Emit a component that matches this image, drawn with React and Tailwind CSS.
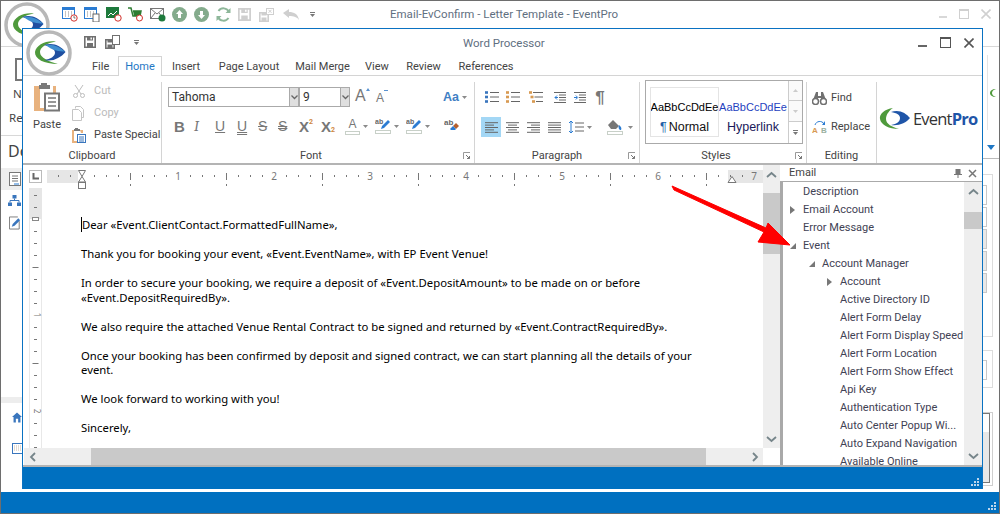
import React from "react";

const UI = "font-['Roboto',sans-serif]";

function Logo({ size = 46 }) {
  return (
    <svg width={size} height={size} viewBox="0 0 46 46" className="shrink-0">
      <circle cx="23" cy="23" r="21" fill="#fff" stroke="#b8b8b8" strokeWidth="3.500" />
      <path d="M30 11.500C20 10 10 15 9 22c-.5 7 9 12 23 12-9-2.500-18-6-18-12 0-5 7-9 16-10.500z" fill="#4f9a3c" />
      <path d="M18 15c9-3 17 1 21.500 7-5 6-13 10-21 8 6-1 10.500-3.500 10.500-7.500 0-3-4-6-11-7.500z" fill="#1f4fa0" />
      <path d="M20 15c7-1.500 14 2 19 6.500-5 0-14-1-19-6.500z" fill="#3f8fd0" />
    </svg>
  );
}

function Swoosh() {
  return (
    <svg width="32" height="24" viewBox="0 0 32 24" className="shrink-0">
      <path d="M14 1C6 2 0 7 1 12c1 6 9 10 19 10-7-2-13-5-13-10 0-5 4-9 7-11z" fill="#4f9a3c" />
      <path d="M12 5c8-3 15 1 19 6-4 5-11 8-19 7 6-1 9-3.500 9-7 0-3-3-5-9-6z" fill="#1f55a8" />
    </svg>
  );
}

function Cal({ clock }) {
  return (
    <svg width="16" height="15" viewBox="0 0 16 15">
      <rect x="0.500" y="0.500" width="12" height="11" fill="#fff" stroke="#2b7cd3" />
      <rect x="0.500" y="0.500" width="12" height="2.500" fill="#2b7cd3" />
      <path d="M3 5h1M6 5h1M9 5h1M3 7h1M6 7h1M9 7h1M3 9h1M6 9h1" stroke="#888" />
      {clock ? <circle cx="12" cy="11" r="3.200" fill="#fff" stroke="#d2322d" /> : <rect x="9" y="7" width="6" height="8" fill="#fff" stroke="#666" />}
      {clock && <path d="M12 9v2h1.500" stroke="#555" fill="none" strokeWidth=".8" />}
    </svg>
  );
}

const Circle = ({ up }) => (
  <svg width="15" height="15" viewBox="0 0 15 15">
    <circle cx="7.500" cy="7.500" r="7.500" fill="#84ab8c" />
    <path d={up ? "M7.500 3L11 7H9v4H6V7H4z" : "M7.500 12L11 8H9V4H6v4H4z"} fill="#fff" />
  </svg>
);

const Floppy = ({ c = "#cfcfcf", w = 12 }) => (
  <svg width={w} height={w} viewBox="0 0 12 12">
    <path d="M.8.8h10.400v10.400H.8z" fill="none" stroke={c} strokeWidth="1.600" />
    <path d="M3 1h6v3.500H3zM3 7h6v4H3z" fill={c} />
    <path d="M6.500 1.500h1.400v2H6.500z" fill="#fff" />
  </svg>
);

function SaveClose({ c = "#cfcfcf", inner }) {
  return (
    <svg width="15" height="14" viewBox="0 0 15 14">
      <path d="M.8 4.800h8.400v8.400H.8z" fill="none" stroke={c} strokeWidth="1.600" />
      <path d="M2.500 5h5v2.500h-5zM2.500 9.500h5V13h-5z" fill={c} />
      <rect x="7.500" y=".5" width="7" height={inner ? 9 : 6} fill="#fff" stroke={c} />
      {!inner && <path d="M9.500 1.800l3 3m0-3l-3 3" stroke={c} />}
    </svg>
  );
}

const Caret = ({ c = "#8a8a8a" }) => (
  <svg width="5" height="3" viewBox="0 0 5 3" className="shrink-0"><path d="M0 0h5L2.500 3z" fill={c} /></svg>
);

const Launcher = () => (
  <svg width="8" height="8" viewBox="0 0 8 8" className="shrink-0">
    <path d="M.5 7V.5H7" fill="none" stroke="#999" />
    <path d="M3 3l3.500 3.500M6.500 4v2.500H4" fill="none" stroke="#777" />
  </svg>
);

function Lines({ a = "left", w = 13 }) {
  const rows = [0, 1, 2, 3, 4];
  return (
    <svg width={w} height="11" viewBox="0 0 13 11">
      {rows.map((i) => {
        const y = i * 2.4 + 0.7;
        const short = i % 2 === 1;
        let x1 = 0, x2 = 13;
        if (short && a === "left") x2 = 9;
        if (short && a === "center") { x1 = 2; x2 = 11; }
        if (short && a === "right") x1 = 4;
        return <path key={i} d={`M${x1} ${y}H${x2}`} stroke="#666" strokeWidth="1" />;
      })}
    </svg>
  );
}

function BulletList({ kind }) {
  const mark = kind === "bullet" ? "#3a76bd" : "#d89a52";
  return (
    <svg width="14" height="12" viewBox="0 0 14 12">
      {[1.5, 6, 10.5].map((y, i) => (
        <g key={i}>
          <rect x={kind === "multi" ? i * 1.5 : 0} y={y - 1.3} width="3" height="2.600" fill={mark} />
          <path d={`M${kind === "multi" ? 4 + i * 1.5 : 5} ${y}H14`} stroke="#666" />
        </g>
      ))}
    </svg>
  );
}

function Indent({ inn }) {
  return (
    <svg width="12" height="11" viewBox="0 0 12 11">
      <path d="M0 .5h12M0 10.500h12M5 3h7M5 5.500h7M5 8h7" stroke="#666" />
      <path d={inn ? "M0 5.500h3M1.800 3.500l2 2-2 2" : "M4 5.500H1M3 3.500l-2 2 2 2"} stroke="#2b7cd3" fill="none" />
    </svg>
  );
}

const HiLite = () => (
  <div className="flex items-center gap-[3px]">
    <svg width="16" height="16" viewBox="0 0 16 16">
      <path d="M6 11l1-3 6-6 2 2-6 6z" fill="#2b7cd3" />
      <rect x=".5" y="12.500" width="15" height="3" fill="#fff" stroke="#c8d0c8" />
      <text x="0" y="6" fontSize="7" fontWeight="700" fill="#666" fontFamily="Liberation Sans">ab</text>
    </svg>
    <Caret />
  </div>
);

function Glyph({ children, className = "" }) {
  return <span className={`font-['Liberation_Sans',sans-serif] text-[#777] leading-none ${className}`}>{children}</span>;
}

function RibbonLabel({ children, launcher, shift }) {
  return (
    <div className={`flex h-[16px] pt-[2px] items-center justify-center relative text-[11px] text-[#444] ${shift ? "pr-[14px]" : ""}`}>
      {children}
      {launcher && <span className="absolute right-[3px] top-[5px]"><Launcher /></span>}
    </div>
  );
}

function Group({ w, label, launcher, shift, children }) {
  return (
    <div className="flex flex-col shrink-0 border-r border-[#d4d4d4]" style={{ width: w }}>
      <div className="flex-1 min-h-0">{children}</div>
      <RibbonLabel launcher={launcher} shift={shift}>{label}</RibbonLabel>
    </div>
  );
}

function Clipboard() {
  return (
    <div className="flex pl-[6px] pt-[1px]">
      <div className="flex flex-col items-center w-[36px]">
        <svg width="28" height="29" viewBox="0 0 28 29">
          <path d="M1 3h6v22h10v3H1zM16 3h7v7h-3V3z" fill="#e8b27e" />
          <path d="M8 0h6v2h3v4H6V2h2z" fill="#7a7a7a" />
          <rect x="12" y="10.500" width="14" height="17" fill="#fff" stroke="#777" strokeWidth="2" />
          <path d="M15 15h8M15 19h8M15 23h8" stroke="#777" strokeWidth="1.600" />
        </svg>
        <span className="text-[11px] text-[#444] mt-[6px] leading-[14px]">Paste</span>
      </div>
      <div className="flex flex-col ml-[7px] -mt-[3px]">
        {[
          ["Cut", "#bbb", <svg key="c" width="14" height="14" viewBox="0 0 14 14"><path d="M3 1l6 9M11 1L5 10" stroke="#bdbdbd" fill="none" /><circle cx="3.500" cy="11.500" r="2" fill="none" stroke="#bdbdbd" /><circle cx="10.500" cy="11.500" r="2" fill="none" stroke="#bdbdbd" /></svg>],
          ["Copy", "#bbb", <svg key="d" width="14" height="15" viewBox="0 0 14 15"><path d="M3.500 2.500V.5h5l3 3v8h-2" fill="#fff" stroke="#c4c4c4" /><path d="M.5 3.500h6l3 3v8h-9z" fill="#fff" stroke="#c4c4c4" /></svg>],
          ["Paste Special", "#444", <svg key="p" width="14" height="15" viewBox="0 0 14 15"><path d="M0 2h2v11h5v2H0zM8 2h3v3H9z" fill="#e8b27e" /><path d="M3 0h3v1h2v2H2V1h1z" fill="#777" /><rect x="5.500" y="6.500" width="8" height="8" fill="#fff" stroke="#3a76bd" /><path d="M7 9h5M7 11h5M7 13h5" stroke="#3a76bd" /></svg>],
        ].map(([t, c, icon]) => (
          <div key={t} className="flex h-[22px] items-center gap-[8px]">
            <span className="w-[14px] flex justify-center">{icon}</span>
            <span className="text-[11px] whitespace-nowrap" style={{ color: c }}>{t}</span>
          </div>
        ))}
      </div>
    </div>
  );
}

function Combo({ w, text }) {
  return (
    <div className="flex h-[20px] border border-[#aaa] bg-white items-stretch" style={{ width: w }}>
      <span className="flex-1 text-[12px] leading-[18px] pl-[3px] text-[#333]">{text}</span>
      <span className="w-[9px] bg-[#dfdfdf] border-l border-[#aaa] flex items-center justify-center">
        <svg width="7" height="5" viewBox="0 0 7 5"><path d="M.5.5l3 3 3-3" fill="none" stroke="#666" strokeWidth="1.300" /></svg>
      </span>
    </div>
  );
}

function Font() {
  return (
    <div className="flex flex-col pl-[6px] pt-[5px]">
      <div className="flex items-center h-[20px]">
        <Combo w="131px" text="Tahoma" />
        <Combo w="51px" text="9" />
        <span className="ml-[5px] w-[21px] flex items-start h-[18px]"><Glyph className="text-[16px] text-[#666]">A</Glyph><svg width="4" height="3" viewBox="0 0 4 3"><path d="M0 3l2-3 2 3z" fill="#5a93d1" /></svg></span>
        <span className="w-[14px] flex items-start h-[16px] mt-[2px]"><Glyph className="text-[12px] text-[#666] mt-[2px]">A</Glyph><svg width="4" height="2" viewBox="0 0 4 2"><path d="M0 0h4v1H0z" fill="#5a93d1" /></svg></span>
        <span className="ml-[53px] flex items-center gap-[3px]"><span className="font-['Liberation_Sans',sans-serif] font-bold text-[12.500px] text-[#3f7fc4]">Aa</span><Caret /></span>
      </div>
      <div className="flex items-center h-[20px] mt-[9px] pl-[6px]">
        <Glyph className="w-[20px] font-bold text-[15px]">B</Glyph>
        <Glyph className="w-[21px] italic font-serif text-[15px]">I</Glyph>
        <Glyph className="w-[22px] underline text-[14px]">U</Glyph>
        <Glyph className="w-[21px] underline decoration-double text-[14px]">U</Glyph>
        <Glyph className="w-[20px] line-through text-[14px]">S</Glyph>
        <Glyph className="w-[21px] line-through decoration-double text-[14px]">S</Glyph>
        <span className="w-[22px] flex items-start"><Glyph className="font-bold text-[15px]">X</Glyph><span className="text-[7px] font-bold leading-none text-[#d0883e]">2</span></span>
        <span className="w-[24px] flex items-end"><Glyph className="font-bold text-[15px]">X</Glyph><span className="text-[7px] font-bold leading-none text-[#d0883e]">2</span></span>
        <span className="w-[30px] flex items-center gap-[3px]">
          <span className="flex flex-col items-center w-[15px]"><Glyph className="text-[12px]">A</Glyph><span className="w-[15px] h-[4px] border border-[#c8d0c8] bg-white mt-[1px]" /></span>
          <Caret />
        </span>
        <span className="w-[31px]"><HiLite /></span>
        <span className="w-[38px]"><HiLite /></span>
        <svg width="15" height="13" viewBox="0 0 15 13" className="-mt-[4px]">
          <text x="0" y="7" fontSize="8" fontWeight="700" fill="#666" fontFamily="Liberation Sans">ab</text>
          <path d="M9 8l3-3 3 3-3 3z" fill="#b5602e" /><path d="M6 11l3-3 3 3-1 1H7z" fill="#2b7cd3" />
        </svg>
      </div>
    </div>
  );
}

function Paragraph() {
  return (
    <div className="flex flex-col pl-[6px] pt-[5px]">
      <div className="flex items-center h-[20px]">
        <span className="w-[21px] flex justify-center"><BulletList kind="bullet" /></span>
        <span className="w-[21px] flex justify-center"><BulletList kind="num" /></span>
        <span className="w-[26px] flex justify-center"><BulletList kind="multi" /></span>
        <span className="w-[21px] flex justify-center"><Indent /></span>
        <span className="w-[20px] flex justify-center"><Indent inn /></span>
        <Glyph className="w-[20px] text-center font-bold text-[17px]">¶</Glyph>
      </div>
      <div className="flex items-center h-[20px] mt-[10px]">
        <span className="w-[20px] h-[20px] bg-[#a3d7f5] flex items-center justify-center"><Lines a="left" /></span>
        <span className="w-[22px] flex justify-center"><Lines a="center" /></span>
        <span className="w-[20px] flex justify-center"><Lines a="right" /></span>
        <span className="w-[22px] flex justify-center"><Lines a="just" /></span>
        <span className="w-[42px] flex items-center pl-[4px] gap-[3px]">
          <svg width="15" height="14" viewBox="0 0 15 14"><path d="M2 1v12M0 3l2-2 2 2M0 11l2 2 2-2" stroke="#2b7cd3" fill="none" /><path d="M6 3h9M6 7h9M6 11h9" stroke="#666" /></svg>
          <Caret />
        </span>
        <span className="flex items-center gap-[5px]">
          <svg width="16" height="16" viewBox="0 0 16 16"><path d="M1 6l5-5 6 6-3 3H4z" fill="#777" /><path d="M12 6c2 2 3 3 2 5-2 0-3-2-2-5z" fill="#2b7cd3" /><rect x=".5" y="12.500" width="15" height="3" fill="#fff" stroke="#c8d0c8" /></svg>
          <Caret />
        </span>
      </div>
    </div>
  );
}

function Styles() {
  return (
    <div className="pl-[5px] -mt-[2px]">
      <div className="flex h-[64px] w-[158px] border border-[#aaa] bg-white font-['Liberation_Sans',sans-serif]">
        <div className="flex flex-1 min-w-0 pl-[4px] py-[6px] overflow-hidden">
          <div className="w-[69px] shrink-0 border border-[#e4e4e4] flex flex-col items-center overflow-hidden">
            <span className="h-[27px] flex items-end text-[11px] text-black whitespace-nowrap">AaBbCcDdEe</span>
            <span className="h-[20px] flex items-end text-[12.500px] leading-[16px] text-[#111] whitespace-nowrap"><span className="text-[#1f5fa8] mr-[2px]">¶</span>Normal</span>
          </div>
          <div className="w-[68px] shrink-0 flex flex-col items-center overflow-hidden pt-[1px]">
            <span className="h-[27px] flex items-end text-[11px] text-[#1f3fc0] whitespace-nowrap">AaBbCcDdEe</span>
            <span className="h-[20px] flex items-end text-[12.500px] leading-[16px] text-[#1a1a5a] whitespace-nowrap">Hyperlink</span>
          </div>
        </div>
        <div className="w-[14px] border-l border-[#ccc] flex flex-col shrink-0">
          <span className="h-[20px] border-b border-[#ccc] flex items-center justify-center bg-[#fafafa]"><svg width="5" height="3" viewBox="0 0 5 3"><path d="M0 3h5L2.500 0z" fill="#ccc" /></svg></span>
          <span className="h-[21px] border-b border-[#ccc] flex items-center justify-center bg-[#fafafa]"><Caret c="#ccc" /></span>
          <span className="flex-1 flex flex-col gap-[1px] items-center justify-center"><span className="w-[5px] h-[1px] bg-[#777]" /><Caret c="#777" /></span>
        </div>
      </div>
    </div>
  );
}

function Editing() {
  return (
    <div className="flex flex-col pl-[5px] pt-[6px]">
      <div className="flex items-center h-[20px] gap-[4px]">
        <svg width="15" height="13" viewBox="0 0 15 13"><path d="M4 0h2v4h3V0h2l3 8H9V6H6v2H1z" fill="#707070" /><circle cx="3.500" cy="9.500" r="3" fill="#fff" stroke="#707070" strokeWidth="1.500" /><circle cx="11.500" cy="9.500" r="3" fill="#fff" stroke="#707070" strokeWidth="1.500" /></svg>
        <span className="text-[11px] text-[#444]">Find</span>
      </div>
      <div className="flex items-center h-[20px] gap-[4px] mt-[9px]">
        <svg width="15" height="14" viewBox="0 0 15 14"><path d="M3 5c1-4 7-5 9-1" fill="none" stroke="#2b7cd3" /><path d="M13 1v4h-3z" fill="#2b7cd3" /><text x="0" y="13" fontSize="8" fontWeight="700" fill="#d89a52" fontFamily="Liberation Sans">A</text><text x="9" y="13" fontSize="8" fontWeight="700" fill="#9ab0a0" fontFamily="Liberation Sans">B</text></svg>
        <span className="text-[11px] text-[#444]">Replace</span>
      </div>
    </div>
  );
}

function HRuler() {
  const ticks = [];
  for (let k = -2; k <= 55; k++) {
    const x = 35 + k * 12;
    if (k % 8 === 0) continue;
    const half = k % 4 === 0;
    ticks.push(
      half ? (
        <path key={k} d={`M${x + 0.5} 3v7M${x + 0.5} 14v2`} stroke="#777" />
      ) : (
        <path key={k} d={`M${x + 0.5} 5v2`} stroke="#777" />
      )
    );
  }
  return (
    <svg width="716" height="23" viewBox="0 0 716 23" className="shrink-0">
      <rect x="0" y="0" width="716" height="13" fill="#fff" />
      <rect x="0" y="0" width="31" height="13" fill="#e6e6e6" />
      <rect x="681" y="0" width="35" height="13" fill="#e6e6e6" />
      {ticks}
      {[1, 2, 3, 4, 5, 6, 7].map((n) => (
        <text key={n} x={35 + n * 96} y="10" textAnchor="middle" fontSize="10" fill="#777" fontFamily="Noto Sans">{n}</text>
      ))}
      <path d="M31.500 .500h7l-3.500 6 3.500 5.500h-7l3.500-5.500z" fill="#fff" stroke="#777" />
      <rect x="31.500" y="12.500" width="7" height="6" fill="#fff" stroke="#777" />
      <path d="M681 12.500l4-6 4 6z" fill="#fff" stroke="#777" />
    </svg>
  );
}

function VRuler() {
  const ticks = [];
  for (let k = 0; k <= 21; k++) {
    const y = 7 + k * 12;
    if (k === 2 || k === 10 || k === 18) continue;
    const half = (k - 2) % 4 === 0;
    ticks.push(<path key={k} d={half ? `M3.500 ${y + 0.5}h6` : `M5 ${y + 0.5}h3`} stroke="#777" />);
  }
  return (
    <svg width="13" height="261" viewBox="0 0 13 261" className="shrink-0">
      <rect x="0" width="13" height="261" fill="#fff" />
      <rect x="0" width="13" height="31" fill="#e6e6e6" />
      <path d="M.5 31v230M12.500 31v230" stroke="#e8e8e8" />
      {ticks}
      <rect x="3.500" y="29.500" width="6" height="3" fill="#fff" stroke="#888" />
      <text x="6.500" y="129" textAnchor="middle" fontSize="8" fill="#777" fontFamily="Noto Sans" transform="rotate(90 6.500 127)">1</text>
      <text x="6.500" y="225" textAnchor="middle" fontSize="8" fill="#777" fontFamily="Noto Sans" transform="rotate(90 6.500 223)">2</text>
    </svg>
  );
}

const Chev = ({ d }) => {
  const p = { up: "M1 6l4.500-4 4.500 4", down: "M1 1l4.500 4 4.500-4", left: "M6 1L2 5l4 4", right: "M2 1l4 4-4 4" }[d];
  const w = d === "up" || d === "down" ? 11 : 8;
  const h = d === "up" || d === "down" ? 7 : 10;
  return <svg width={w} height={h} viewBox={`0 0 ${w} ${h}`}><path d={p} fill="none" stroke="#76858a" strokeWidth="1.800" /></svg>;
};

function DocPanel() {
  return (
    <div className="w-[756px] shrink-0 flex flex-col">
      <div className="flex flex-1 min-h-0">
        <div className="w-[739px] flex flex-col shrink-0 overflow-hidden">
          <div className="flex h-[23px] shrink-0 pl-[5px] pt-[5px] gap-[5px]">
            <span className="w-[13px] h-[13px] border border-[#bbb] flex items-center justify-center shrink-0">
              <svg width="7" height="7" viewBox="0 0 7 7"><path d="M1.500 0v5.500H7" fill="none" stroke="#666" strokeWidth="2" /></svg>
            </span>
            <HRuler />
          </div>
          <div className="flex flex-1 min-h-0 pl-[5px]">
            <VRuler />
            <div className="pl-[39px] pt-[30px] text-[11.300px] leading-[14.500px] text-black font-['Noto_Sans',sans-serif] whitespace-nowrap">
              <p><span className="border-l border-black">Dear</span> «Event.ClientContact.FormattedFullName»,</p><br />
              <p>Thank you for booking your event, «Event.EventName», with EP Event Venue!</p><br />
              <p>In order to secure your booking, we require a deposit of «Event.DepositAmount» to be made on or before<br />«Event.DepositRequiredBy».</p><br />
              <p>We also require the attached Venue Rental Contract to be signed and returned by «Event.ContractRequiredBy».</p><br />
              <p>Once your booking has been confirmed by deposit and signed contract, we can start planning all the details of your<br />event.</p><br />
              <p>We look forward to working with you!</p><br />
              <p>Sincerely,</p>
            </div>
          </div>
        </div>
        <div className="w-[17px] bg-[#eeeeee] flex flex-col items-center shrink-0">
          <span className="h-[18px] flex items-center"><Chev d="up" /></span>
          <span className="w-full h-[61px] bg-[#c9c9c9] mt-[10px]" />
          <span className="flex-1" />
          <span className="h-[18px] flex items-center"><Chev d="down" /></span>
        </div>
      </div>
      <div className="h-[17px] flex shrink-0">
        <div className="w-[739px] bg-[#eeeeee] flex items-center">
          <span className="w-[67px] pl-[5px] flex items-center"><Chev d="left" /></span>
          <span className="w-[615px] h-full bg-[#c9c9c9]" />
          <span className="flex-1 flex justify-end pr-[4px]"><Chev d="right" /></span>
        </div>
      </div>
    </div>
  );
}

const ROWS = [
  ["Description", 0], ["Email Account", 0, "r"], ["Error Message", 0], ["Event", 0, "d"],
  ["Account Manager", 1, "d"], ["Account", 2, "r"], ["Active Directory ID", 2], ["Alert Form Delay", 2],
  ["Alert Form Display Speed", 2], ["Alert Form Location", 2], ["Alert Form Show Effect", 2], ["Api Key", 2],
  ["Authentication Type", 2], ["Auto Center Popup Wi...", 2], ["Auto Expand Navigation", 2], ["Available Online", 2],
];

function Tree() {
  return (
    <div className="flex-1 min-w-0 overflow-hidden pt-[1px]">
      {ROWS.map(([t, lvl, ex]) => (
        <div key={t} className="h-[18px] flex items-center text-[11px] text-[#3f4254] whitespace-nowrap" style={{ paddingLeft: 6 + lvl * 18 + (lvl > 0 ? 1 : 0) }}>
          <span className="w-[14px] flex justify-start pl-[1px] shrink-0">
            {ex === "r" && <svg width="5" height="8" viewBox="0 0 5 8"><path d="M0 0l5 4-5 4z" fill="#777" /></svg>}
            {ex === "d" && <svg width="6" height="6" viewBox="0 0 6 6"><path d="M6 0v6H0z" fill="#777" /></svg>}
          </span>
          <span>{t}</span>
        </div>
      ))}
    </div>
  );
}

function EmailPanel() {
  return (
    <div className="flex-1 min-w-0 border-l-[3px] border-[#a9a9a9] flex flex-col">
      <div className="h-[17px] flex items-center shrink-0 pl-[9px] pr-[5px] border-b border-[#aaa] text-[11px] text-[#444] -ml-[3px] bg-white z-10">
        <span className="flex-1">Email</span>
        <svg width="8" height="9" viewBox="0 0 8 9" className="mr-[6px]"><path d="M1.500 0h5v5H8v1H4.500v3h-1V6H0V5h1.500z" fill="#777" /></svg>
        <svg width="9" height="9" viewBox="0 0 9 9"><path d="M1 1l7 7M8 1L1 8" stroke="#777" strokeWidth="1.500" /></svg>
      </div>
      <div className="flex flex-1 min-h-0">
        <Tree />
        <div className="w-[18px] bg-[#eeeeee] flex flex-col items-center shrink-0">
          <span className="h-[18px] flex items-center"><Chev d="up" /></span>
          <span className="w-full h-[17px] bg-[#c9c9c9] mt-[12px]" />
          <span className="flex-1" />
          <span className="h-[18px] flex items-center"><Chev d="down" /></span>
        </div>
      </div>
    </div>
  );
}

const Grip = () => (
  <svg width="9" height="9" viewBox="0 0 9 9"><path d="M6 0h2v2H6zM3 3h2v2H3zM6 3h2v2H6zM0 6h2v2H0zM3 6h2v2H3zM6 6h2v2H6z" fill="#bcd6ec" /></svg>
);

function WordWindow() {
  return (
    <div className="absolute left-[22px] top-[28px] w-[961px] h-[461px] border border-[#0a72c2] border-b-0 bg-white flex flex-col">
      <div className="h-[27px] flex items-start shrink-0 relative">
        <div className="absolute left-[3px] top-[1px] z-10"><Logo /></div>
        <div className="flex items-center gap-[9px] pl-[61px] pt-[6px] w-[200px]">
          <Floppy c="#707070" />
          <SaveClose c="#707070" inner />
          <span className="ml-[5px]"><span className="block w-[5px] h-[1px] bg-[#777] mb-[1px]" /><Caret c="#777" /></span>
        </div>
        <span className="absolute left-[440px] top-[6px] text-[11.500px] text-[#5f6f7f]">Word Processor</span>
        <div className="ml-auto flex items-center gap-[13px] pr-[8px] pt-[8px]">
          <span className="w-[9px] h-[2px] bg-[#666] mt-[6px]" />
          <span className="w-[11px] h-[11px] border border-[#555] border-t-2" />
          <svg width="10" height="10" viewBox="0 0 10 10"><path d="M.5.5l9 9M9.500.5l-9 9" stroke="#555" strokeWidth="1.600" /></svg>
        </div>
      </div>
      <div className="h-[20px] flex shrink-0 items-end pl-[58px] text-[11px] text-[#444] border-b border-[#d4d4d4] whitespace-nowrap">
        <span className="w-[37px] h-[19px] flex items-center pl-[11px] pt-[3px]">File</span>
        <span className="w-[44px] h-[20px] flex items-center justify-center border border-b-0 border-[#d4d4d4] text-[#1f77c4] bg-white -mb-[1px] pt-[2px]">Home</span>
        <span className="w-[48px] h-[19px] flex items-center justify-center pt-[3px]">Insert</span>
        <span className="w-[78px] h-[19px] flex items-center justify-center pt-[3px]">Page Layout</span>
        <span className="w-[69px] h-[19px] flex items-center justify-center pt-[3px]">Mail Merge</span>
        <span className="w-[40px] h-[19px] flex items-center justify-center pt-[3px]">View</span>
        <span className="w-[53px] h-[19px] flex items-center justify-center pt-[3px]">Review</span>
        <span className="w-[72px] h-[19px] flex items-center justify-center pt-[3px]">References</span>
      </div>
      <div className="h-[89px] flex shrink-0 border-b-2 border-[#b4b4b4] pt-[6px]">
        <Group w="139px" label="Clipboard"><Clipboard /></Group>
        <Group w="313px" label="Font" launcher shift><Font /></Group>
        <Group w="165px" label="Paragraph" launcher><Paragraph /></Group>
        <Group w="167px" label="Styles" launcher shift><Styles /></Group>
        <Group w="70px" label="Editing"><Editing /></Group>
        <div className="flex-1 flex items-start pl-[2px] pt-[25px] gap-[2px] min-w-0">
          <Swoosh />
          <span className="font-['Open_Sans',sans-serif] text-[16.500px] leading-[24px] font-medium tracking-[-0.8px] whitespace-nowrap text-[#333]">Event<span className="text-[#1f55a8] font-bold">Pro</span></span>
        </div>
      </div>
      <div className="h-[302px] flex shrink-0 border-b-2 border-[#b4b4b4] pl-[1px]">
        <DocPanel />
        <EmailPanel />
      </div>
      <div className="flex-1 bg-[#0070c0] flex items-end justify-end pr-[2px] pb-[2px]"><Grip /></div>
    </div>
  );
}

function TopIcons() {
  return (
    <div className="flex items-center h-[15px]">
      <span className="w-[22px]"><Cal clock /></span>
      <span className="w-[22px]"><Cal /></span>
      <span className="w-[22px]">
        <svg width="16" height="15" viewBox="0 0 16 15"><rect width="13" height="11" fill="#1e7a3c" /><path d="M2 9l3-3 2 2 4-4" stroke="#fff" fill="none" /><circle cx="12" cy="11" r="3.200" fill="#fff" stroke="#d2322d" /></svg>
      </span>
      <span className="w-[22px]">
        <svg width="16" height="15" viewBox="0 0 16 15"><path d="M0 1h3l2 8h7l1-5H5" fill="none" stroke="#2e7d32" strokeWidth="1.500" /><path d="M5 4h8l-1 5H6z" fill="#2e7d32" /><circle cx="11.500" cy="11" r="3" fill="#fff" stroke="#d2322d" /></svg>
      </span>
      <span className="w-[22px]">
        <svg width="16" height="15" viewBox="0 0 16 15"><rect x=".5" y="1.500" width="13" height="10" fill="#fff" stroke="#777" /><path d="M1 2l6 5 6-5M1 11l4-5M13 11L9 6" stroke="#777" fill="none" /><circle cx="12" cy="11" r="3.500" fill="#1e7a3c" /></svg>
      </span>
      <span className="w-[22px]"><Circle up /></span>
      <span className="w-[22px]"><Circle /></span>
      <span className="w-[22px]">
        <svg width="15" height="15" viewBox="0 0 15 15"><path d="M13 5A6 6 0 0 0 2.500 4M2 10a6 6 0 0 0 10.500 1" fill="none" stroke="#8eb79a" strokeWidth="2" /><path d="M14.500 1v5h-5zM.5 14V9h5z" fill="#8eb79a" /></svg>
      </span>
      <span className="w-[21px]"><Floppy w={13} /></span>
      <span className="w-[24px]"><SaveClose /></span>
      <span className="w-[21px]">
        <svg width="16" height="11" viewBox="0 0 16 11"><path d="M0 4l6-4v3c5 0 9 2 10 8-2-3-5-4-10-4v2z" fill="#cfcfcf" /></svg>
      </span>
      <span className="ml-[6px]"><span className="block w-[5px] h-[1px] bg-[#777] mb-[1px]" /><Caret c="#777" /></span>
    </div>
  );
}

function LeftStrip() {
  return (
    <div className="w-[21px] shrink-0 flex flex-col overflow-hidden text-[#444] whitespace-nowrap font-['Noto_Sans',sans-serif]">
      <div className="h-[89px] border-b border-[#d8d8d8] pl-[14px] pt-[11px] relative">
        <span className="block w-[16px] h-[23px] border-2 border-[#777]" />
        <span className="block -ml-[2px] mt-[6px] text-[11.500px] leading-[14px]">New</span>
        <span className="block -ml-[6px] mt-[10px] text-[11.500px] leading-[14px]">Report</span>
      </div>
      <div className="h-[32px] pl-[7px] pt-[4px] text-[16px] leading-[22px]">Document</div>
      <div className="h-[22px] bg-[#eeeeee] flex items-center pl-[8px]">
        <svg width="12" height="14" viewBox="0 0 12 14"><rect x=".5" y=".5" width="11" height="13" fill="#fff" stroke="#777" /><path d="M3 4h6M3 6.500h6M3 9h6" stroke="#777" /><path d="M5 12h5" stroke="#2b7cd3" /></svg>
      </div>
      <div className="h-[21px] flex items-center pl-[7px]">
        <svg width="13" height="11" viewBox="0 0 13 11"><path d="M4.500 0h4v3.500h-4zM0 7.500h4V11H0zM9 7.500h4V11H9z" fill="#3a76bd" /><path d="M6.500 3.500V6M2 7.500V5.500h9v2" stroke="#3a76bd" fill="none" /></svg>
      </div>
      <div className="h-[24px] flex items-center pl-[8px]">
        <svg width="14" height="14" viewBox="0 0 14 14"><path d="M11 5v8.500H.5V.5h9" fill="#fff" stroke="#777" /><path d="M3 11l1-3 6-6 2 2-6 6z" fill="#3a76bd" /></svg>
      </div>
      <div className="flex-1" />
      <div className="h-[6px] bg-[#ededed]" />
      <div className="h-[28px] flex items-center pl-[11px]">
        <svg width="13" height="13" viewBox="0 0 13 13"><path d="M6.500 0L13 6h-2v7H8V8H5v5H2V6H0z" fill="#3a76bd" /></svg>
      </div>
      <div className="h-[61px] pl-[11px] pt-[12px]">
        <svg width="12" height="11" viewBox="0 0 12 11"><rect x=".5" y=".5" width="11" height="10" fill="#fff" stroke="#3a76bd" /><path d="M2 3h8M2 5h8M2 7h8" stroke="#c8b8a8" strokeDasharray="1 1" /></svg>
      </div>
    </div>
  );
}

function Box({ className = "" }) {
  return <div className={`h-[20px] w-[5px] border border-l-0 border-[#c8c8c8] ${className}`} />;
}

function RightStrip() {
  return (
    <div className="w-[17px] shrink-0 flex flex-col overflow-hidden">
      <div className="h-[112px] border-b border-[#bbb]">
        <div className="h-[75px] mt-[8px] border-l border-[#e4e4e4] ml-[5px] flex items-center pl-[2px]">
          <svg width="7" height="10" viewBox="0 0 7 10" className="mt-[1px]"><path d="M6 1C2 1 0 3 0 5s2 4 6 4C3 8 2 6.500 2 5s1-3 4-4z" fill="#4f9a3c" /></svg>
        </div>
        <div className="flex justify-center mt-[15px]"><svg width="8" height="5" viewBox="0 0 8 5"><path d="M0 0h8L4 5z" fill="#1f77c4" /></svg></div>
      </div>
      <div className="h-[163px] mt-[15px] w-[11px] border border-l-0 border-[#dcdcdc] pt-[10px] flex flex-col gap-[2px]">
        <Box /><Box />
        <Box className="bg-[#e8e8e8]" /><Box className="bg-[#e8e8e8]" /><Box className="bg-[#e8e8e8]" />
      </div>
      <div className="h-[38px] mt-[13px] w-[11px] border border-l-0 border-[#dcdcdc] pt-[9px]"><Box /></div>
      <div className="h-[74px] mt-[24px] w-[11px] border border-l-0 border-[#cfcfcf]">
        <div className="h-[70px] w-[8px] border border-l-0 border-[#777] pt-[18px]">
          <div className="h-[50px] w-[7px] bg-[#e8e8e8]" />
        </div>
      </div>
    </div>
  );
}

function Outer() {
  return (
    <div className="w-[1000px] h-[514px] border border-[#6e6e6e] bg-white flex flex-col overflow-hidden">
      <div className="h-[46px] shrink-0 flex items-start relative border-b border-[#d8d8d8]">
        <div className="absolute left-[3px] top-[1px]"><Logo /></div>
        <div className="pl-[61px] pt-[6px]"><TopIcons /></div>
        <span className="absolute left-[389px] top-[5px] text-[11.500px] text-[#5f6f7f] whitespace-nowrap">Email-EvConfirm - Letter Template - EventPro</span>
        <div className="ml-auto flex items-center gap-[12px] pr-[8px] pt-[8px]">
          <span className="w-[8px] h-[2px] bg-[#d8d8d8] mt-[5px]" />
          <span className="w-[10px] h-[10px] border border-[#d0d0d0] border-t-2" />
          <svg width="10" height="10" viewBox="0 0 10 10"><path d="M.5.5l9 9M9.500.5l-9 9" stroke="#d0d0d0" strokeWidth="1.600" /></svg>
        </div>
      </div>
      <div className="flex-1 min-h-0 flex justify-between">
        <LeftStrip />
        <RightStrip />
      </div>
      <div className="h-[21px] shrink-0 bg-[#0070c0] flex items-end justify-end pr-[2px] pb-[2px]"><Grip /></div>
    </div>
  );
}

function Arrow() {
  return (
    <svg width="130" height="70" viewBox="0 0 130 70" className="absolute left-[668px] top-[183px] pointer-events-none">
      <path d="M4 3L6 7 96 49 90 59 122 62 100 40 98 45Z" fill="#ff0000" stroke="#ff0000" strokeWidth="1" strokeLinejoin="round" />
    </svg>
  );
}

export default function App() {
  return (
    <div className={`relative w-[1000px] h-[514px] overflow-hidden bg-white ${UI}`}>
      <Outer />
      <WordWindow />
      <Arrow />
    </div>
  );
}
